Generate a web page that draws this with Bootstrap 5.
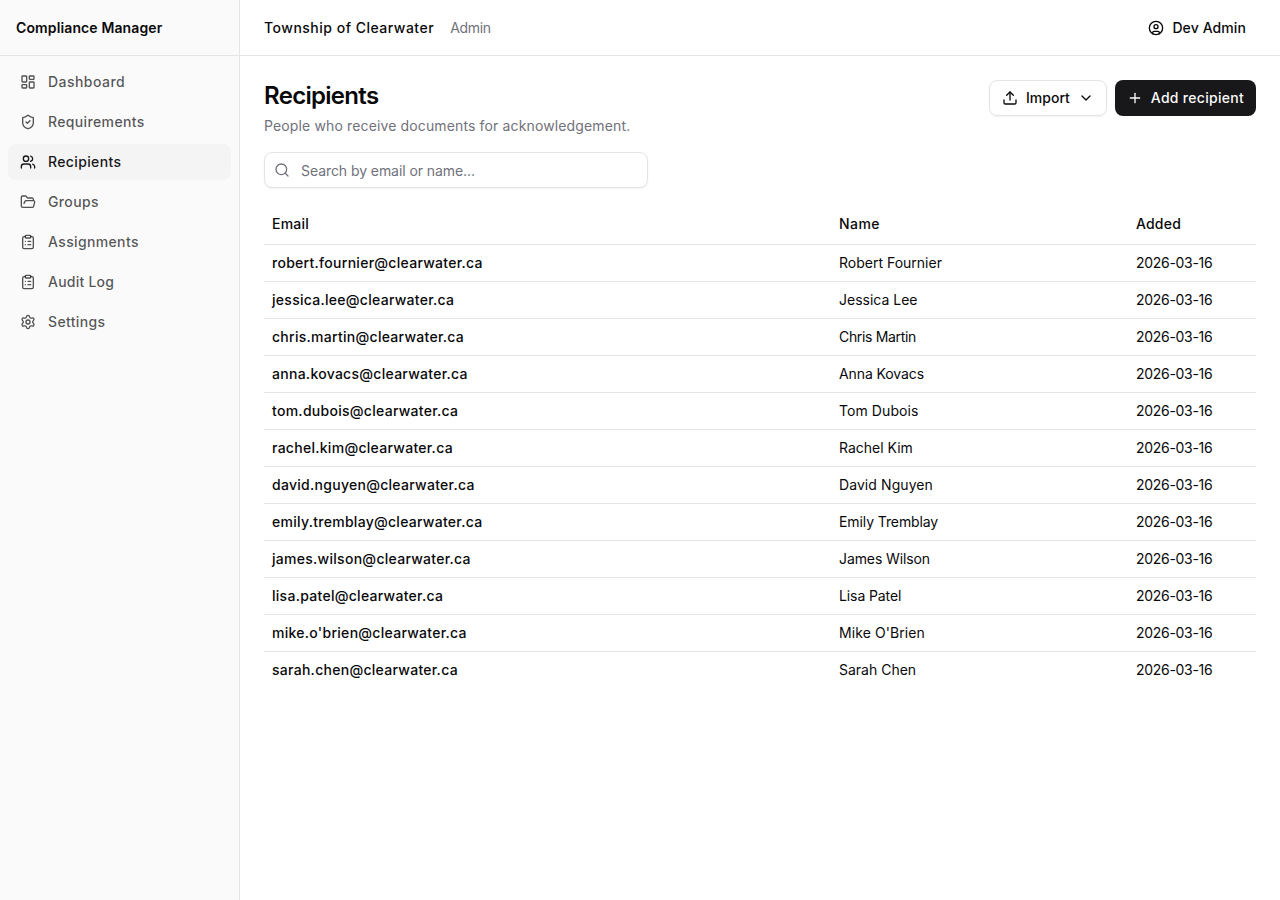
<!DOCTYPE html>
<html lang="en">
<head>
<meta charset="utf-8">
<meta name="viewport" content="width=device-width, initial-scale=1">
<title>Recipients - Compliance Manager</title>
<link href="https://cdn.jsdelivr.net/npm/bootstrap@5.3.0/dist/css/bootstrap.min.css" rel="stylesheet">
<style>
:root { --ink: #09090b; --muted: #71717b; --line: #e4e4e7; }
body { font-family: Inter, "Liberation Sans", sans-serif; font-size: 14px; line-height: 20px; color: var(--ink); background: #fff; }
.icon { width: 16px; height: 16px; flex: none; fill: none; stroke: currentColor; stroke-width: 2; stroke-linecap: round; stroke-linejoin: round; }
.sidebar { width: 240px; background: #fafafa; border-right: 1px solid var(--line); }
.bar { height: 56px; border-bottom: 1px solid var(--line); }
.brand { letter-spacing: .12px; }
.side-nav { gap: 4px; padding: 8px; }
.side-nav .nav-link { height: 36px; gap: 12px; padding: 0 12px; border-radius: 8px; font-weight: 500; letter-spacing: .36px; color: rgba(9, 9, 11, .7); }
.side-nav .nav-link:first-child { letter-spacing: .46px; }
.side-nav .nav-link:nth-child(6) { letter-spacing: .24px; }
.side-nav .nav-link.active { background: #f4f4f5; color: #18181b; }
.text-soft { color: var(--muted); }
.org { font-weight: 500; letter-spacing: .5px; }
.role { letter-spacing: -.3px; }
.page-title { font-size: 24px; line-height: 32px; font-weight: 600; letter-spacing: -0.7px; }
.intro { letter-spacing: .135px; }
.btn { --bs-btn-font-size: 14px; --bs-btn-font-weight: 500; --bs-btn-line-height: 20px; --bs-btn-padding-x: 12px; --bs-btn-padding-y: 0; --bs-btn-border-radius: 8px; height: 36px; }
.btn-user { --bs-btn-padding-x: 10px; --bs-btn-border-width: 0; --bs-btn-color: var(--ink); height: 32px; letter-spacing: .1px; }
.btn-line { --bs-btn-color: var(--ink); --bs-btn-bg: #fff; --bs-btn-border-color: var(--line); box-shadow: 0 1px 2px rgba(0, 0, 0, .05); }
.btn-ink { --bs-btn-color: #fafafa; --bs-btn-bg: #18181b; --bs-btn-border-width: 0; letter-spacing: .29px; }
.search { width: 384px; height: 36px; }
.search .icon { position: absolute; left: 10px; top: 10px; color: var(--muted); }
.search .form-control { height: 36px; padding: 4px 12px 4px 36px; font-size: 14px; line-height: 20px; letter-spacing: -.07px; border-color: var(--line); border-radius: 8px; box-shadow: 0 1px 2px rgba(0, 0, 0, .05); }
.search .form-control::placeholder { color: var(--muted); }
.people { --bs-table-color: var(--ink); --bs-table-bg: transparent; table-layout: fixed; border-color: var(--line); }
.people > :not(caption) > * > * { padding: 8px; vertical-align: middle; }
.people thead th { height: 40px; font-weight: 500; letter-spacing: .2px; }
.people thead .col-name { letter-spacing: .45px; }
.people td:last-child { letter-spacing: -.3px; }
.people .mail { font-weight: 500; letter-spacing: .28px; }
.people .snug { letter-spacing: -.1px; }
.people .tight { letter-spacing: -.33px; }
.people .loose { letter-spacing: .08px; }
.people tbody tr:last-child td { border-bottom: 0; }
.col-mail { width: 567px; }
.col-name { width: 297px; }
</style>
</head>
<body>
<div class="d-flex vh-100">
  <aside class="sidebar d-flex flex-column flex-shrink-0">
    <div class="bar brand d-flex align-items-center px-3 fw-semibold">Compliance Manager</div>
    <nav class="side-nav nav flex-column">
      <a class="nav-link d-flex align-items-center" href="#"><svg class="icon" viewBox="0 0 24 24"><rect width="7" height="9" x="3" y="3" rx="1"/><rect width="7" height="5" x="14" y="3" rx="1"/><rect width="7" height="9" x="14" y="12" rx="1"/><rect width="7" height="5" x="3" y="16" rx="1"/></svg>Dashboard</a>
      <a class="nav-link d-flex align-items-center" href="#"><svg class="icon" viewBox="0 0 24 24"><path d="M20 13c0 5-3.5 7.5-7.66 8.95a1 1 0 0 1-.67-.01C7.5 20.5 4 18 4 13V6a1 1 0 0 1 1-1c2 0 4.5-1.2 6.24-2.72a1.17 1.17 0 0 1 1.52 0C14.51 3.81 17 5 19 5a1 1 0 0 1 1 1z"/><path d="m9 12 2 2 4-4"/></svg>Requirements</a>
      <a class="nav-link active d-flex align-items-center" href="#"><svg class="icon" viewBox="0 0 24 24"><path d="M16 21v-2a4 4 0 0 0-4-4H6a4 4 0 0 0-4 4v2"/><path d="M16 3.128a4 4 0 0 1 0 7.744"/><path d="M22 21v-2a4 4 0 0 0-3-3.87"/><circle cx="9" cy="7" r="4"/></svg>Recipients</a>
      <a class="nav-link d-flex align-items-center" href="#"><svg class="icon" viewBox="0 0 24 24"><path d="m6 14 1.5-2.9A2 2 0 0 1 9.24 10H20a2 2 0 0 1 1.94 2.5l-1.54 6a2 2 0 0 1-1.95 1.5H4a2 2 0 0 1-2-2V5a2 2 0 0 1 2-2h3.9a2 2 0 0 1 1.69.9l.81 1.2a2 2 0 0 0 1.67.9H18a2 2 0 0 1 2 2v2"/></svg>Groups</a>
      <a class="nav-link d-flex align-items-center" href="#"><svg class="icon" viewBox="0 0 24 24"><rect width="8" height="4" x="8" y="2" rx="1" ry="1"/><path d="M16 4h2a2 2 0 0 1 2 2v14a2 2 0 0 1-2 2H6a2 2 0 0 1-2-2V6a2 2 0 0 1 2-2h2"/><path d="M12 11h4"/><path d="M12 16h4"/><path d="M8 11h.01"/><path d="M8 16h.01"/></svg>Assignments</a>
      <a class="nav-link d-flex align-items-center" href="#"><svg class="icon" viewBox="0 0 24 24"><rect width="8" height="4" x="8" y="2" rx="1" ry="1"/><path d="M16 4h2a2 2 0 0 1 2 2v14a2 2 0 0 1-2 2H6a2 2 0 0 1-2-2V6a2 2 0 0 1 2-2h2"/><path d="M12 11h4"/><path d="M12 16h4"/><path d="M8 11h.01"/><path d="M8 16h.01"/></svg>Audit Log</a>
      <a class="nav-link d-flex align-items-center" href="#"><svg class="icon" viewBox="0 0 24 24"><path d="M9.671 4.136a2.34 2.34 0 0 1 4.659 0 2.34 2.34 0 0 0 3.319 1.915 2.34 2.34 0 0 1 2.33 4.033 2.34 2.34 0 0 0 0 3.831 2.34 2.34 0 0 1-2.33 4.033 2.34 2.34 0 0 0-3.319 1.915 2.34 2.34 0 0 1-4.659 0 2.34 2.34 0 0 0-3.32-1.915 2.34 2.34 0 0 1-2.33-4.033 2.34 2.34 0 0 0 0-3.831A2.34 2.34 0 0 1 6.35 6.051a2.34 2.34 0 0 0 3.319-1.915"/><circle cx="12" cy="12" r="3"/></svg>Settings</a>
    </nav>
  </aside>
  <div class="flex-grow-1 d-flex flex-column">
    <header class="bar d-flex align-items-center justify-content-between px-4">
      <div class="d-flex align-items-center gap-3"><span class="org">Township of Clearwater</span><span class="role text-soft">Admin</span></div>
      <button class="btn btn-user d-inline-flex align-items-center gap-2" type="button"><svg class="icon" viewBox="0 0 24 24"><circle cx="12" cy="12" r="10"/><circle cx="12" cy="10" r="3"/><path d="M7 20.662V19a2 2 0 0 1 2-2h6a2 2 0 0 1 2 2v1.662"/></svg>Dev Admin</button>
    </header>
    <main class="p-4">
      <div class="d-flex justify-content-between align-items-start mb-3">
        <div>
          <h1 class="page-title mb-1">Recipients</h1>
          <p class="intro text-soft mb-0">People who receive documents for acknowledgement.</p>
        </div>
        <div class="d-flex gap-2">
          <button class="btn btn-line d-inline-flex align-items-center gap-2" type="button"><svg class="icon" viewBox="0 0 24 24"><path d="M12 3v12"/><path d="m17 8-5-5-5 5"/><path d="M21 15v4a2 2 0 0 1-2 2H5a2 2 0 0 1-2-2v-4"/></svg>Import<svg class="icon" viewBox="0 0 24 24"><path d="m6 9 6 6 6-6"/></svg></button>
          <button class="btn btn-ink d-inline-flex align-items-center gap-2" type="button"><svg class="icon" viewBox="0 0 24 24"><path d="M5 12h14"/><path d="M12 5v14"/></svg>Add recipient</button>
        </div>
      </div>
      <div class="search position-relative mb-3">
        <svg class="icon" viewBox="0 0 24 24"><path d="m21 21-4.34-4.34"/><circle cx="11" cy="11" r="8"/></svg>
        <input class="form-control" type="text" placeholder="Search by email or name...">
      </div>
      <table class="people table mb-0">
        <thead><tr><th class="col-mail">Email</th><th class="col-name">Name</th><th>Added</th></tr></thead>
        <tbody>
          <tr><td class="mail">robert.fournier@clearwater.ca</td><td>Robert Fournier</td><td>2026-03-16</td></tr>
          <tr><td class="mail">jessica.lee@clearwater.ca</td><td>Jessica Lee</td><td>2026-03-16</td></tr>
          <tr><td class="mail">chris.martin@clearwater.ca</td><td class="tight">Chris Martin</td><td>2026-03-16</td></tr>
          <tr><td class="mail">anna.kovacs@clearwater.ca</td><td class="snug">Anna Kovacs</td><td>2026-03-16</td></tr>
          <tr><td class="mail">tom.dubois@clearwater.ca</td><td class="loose">Tom Dubois</td><td>2026-03-16</td></tr>
          <tr><td class="mail">rachel.kim@clearwater.ca</td><td>Rachel Kim</td><td>2026-03-16</td></tr>
          <tr><td class="mail">david.nguyen@clearwater.ca</td><td class="loose">David Nguyen</td><td>2026-03-16</td></tr>
          <tr><td class="mail">emily.tremblay@clearwater.ca</td><td class="snug">Emily Tremblay</td><td>2026-03-16</td></tr>
          <tr><td class="mail">james.wilson@clearwater.ca</td><td class="snug">James Wilson</td><td>2026-03-16</td></tr>
          <tr><td class="mail">lisa.patel@clearwater.ca</td><td class="snug">Lisa Patel</td><td>2026-03-16</td></tr>
          <tr><td class="mail">mike.o'brien@clearwater.ca</td><td class="loose">Mike O'Brien</td><td>2026-03-16</td></tr>
          <tr><td class="mail">sarah.chen@clearwater.ca</td><td>Sarah Chen</td><td>2026-03-16</td></tr>
        </tbody>
      </table>
    </main>
  </div>
</div>
<script src="https://cdn.jsdelivr.net/npm/bootstrap@5.3.0/dist/js/bootstrap.bundle.min.js"></script>
</body>
</html>
